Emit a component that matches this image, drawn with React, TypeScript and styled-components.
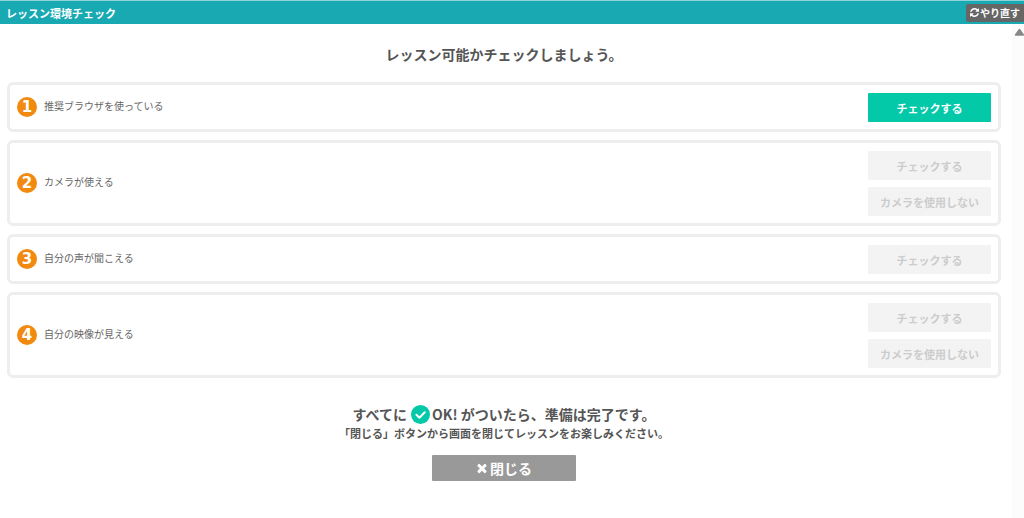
import React from "react";
import styled, { createGlobalStyle } from "styled-components";

const GlobalStyle = createGlobalStyle`
  * { box-sizing: border-box; }
  html, body, #root { height: 100%; }
  body {
    margin: 0;
    color: #555;
    background: #fff;
    font-family: "Noto Sans CJK JP", "Noto Sans", sans-serif;
    overflow: hidden;
  }
  button { font-family: inherit; padding: 0; border: 0; cursor: pointer; }
`;

const Page = styled.div`
  display: flex;
  flex-direction: column;
  height: 100%;
`;

const Header = styled.header`
  display: flex;
  align-items: center;
  justify-content: space-between;
  flex: none;
  height: 24px;
  padding-left: 6px;
  border-top: 1px solid #8fd3d8;
  background: #18a9b3;
  color: #fff;
`;

const Title = styled.h1`
  margin: 0;
  font-size: 11px;
  line-height: 16px;
`;

const RetryButton = styled.button`
  display: flex;
  align-items: center;
  gap: 1px;
  height: 18px;
  padding: 0 4px;
  border-radius: 2px 0 0 2px;
  background: #666;
  color: #fff;
  font-size: 10px;
  font-weight: 700;
  line-height: 18px;
`;

const Icon = styled.svg<{ $size: number }>`
  flex: none;
  width: ${(p) => p.$size}px;
  height: ${(p) => p.$size}px;
  fill: currentColor;
`;

const Body = styled.div`
  display: flex;
  flex: 1;
  min-height: 0;
`;

const Content = styled.main`
  flex: 1;
  min-width: 0;
  padding: 19px 11px 0 7px;
  text-align: center;
`;

const ScrollTrack = styled.div`
  flex: none;
  width: 12px;
  padding: 4px 0 0 2px;
  background: #fcfcfc;
  overflow: hidden;
`;

const ScrollArrow = styled.svg`
  display: block;
  width: 10px;
  height: 8px;
`;

const Heading = styled.h2`
  margin: 0 0 17px;
  font-size: 14px;
  line-height: 22px;
`;

const Steps = styled.ol`
  display: grid;
  gap: 8px;
  margin: 0;
  padding: 0;
  list-style: none;
`;

const Step = styled.li`
  display: flex;
  align-items: center;
  padding: 8px 7px 7px;
  border: 3px solid #eee;
  border-radius: 6px;
  text-align: left;
`;

const StepInfo = styled.div`
  display: flex;
  flex: 1;
  align-items: center;
  gap: 7px;
  padding-bottom: 2px;
`;

const Badge = styled.span`
  display: grid;
  place-items: center;
  width: 20px;
  height: 20px;
  border-radius: 50%;
  background: #f28a0f;
  color: #fff;
  font-family: "DejaVu Sans", sans-serif;
  font-size: 15px;
  font-weight: 700;
  line-height: 20px;
`;

const Label = styled.span`
  padding-bottom: 2px;
  color: #666;
  font-size: 10px;
  line-height: 16px;
`;

const Actions = styled.div`
  display: grid;
  gap: 7px;
  width: 123px;
`;

const ActionButton = styled.button`
  height: 29px;
  border-radius: 1px;
  background: #04c9a9;
  color: #fff;
  font-size: 11px;
  font-weight: 700;

  &:disabled {
    background: #f3f3f3;
    color: #ccc;
    cursor: default;
  }
`;

const Summary = styled.p`
  display: flex;
  align-items: center;
  justify-content: center;
  margin: 26px 0 0;
  font-size: 14px;
  font-weight: 700;
  line-height: 20px;
`;

const OkMark = styled.svg`
  width: 19px;
  height: 19px;
  margin: 0 2px 0 4px;
`;

const Note = styled.p`
  margin: 1px 0 14px;
  font-size: 11px;
  font-weight: 700;
  line-height: 16px;
`;

const CloseButton = styled.button`
  display: inline-flex;
  align-items: center;
  justify-content: center;
  gap: 2px;
  width: 144px;
  height: 26px;
  border-radius: 1px;
  background: #999;
  color: #fff;
  font-size: 14px;
  font-weight: 700;
  line-height: 26px;
`;

const steps = [
  { label: "推奨ブラウザを使っている", enabled: true, actions: ["チェックする"] },
  { label: "カメラが使える", enabled: false, actions: ["チェックする", "カメラを使用しない"] },
  { label: "自分の声が聞こえる", enabled: false, actions: ["チェックする"] },
  { label: "自分の映像が見える", enabled: false, actions: ["チェックする", "カメラを使用しない"] },
];

export default function App() {
  return (
    <Page>
      <GlobalStyle />
      <Header>
        <Title>レッスン環境チェック</Title>
        <RetryButton type="button">
          <Icon $size={9} viewBox="128 128 1536 1536" aria-hidden="true">
            <path d="M1639 1056q0 5-1 7-64 268-268 434.5t-478 166.5q-146 0-282.5-55t-243.5-157l-129 129q-19 19-45 19t-45-19-19-45v-448q0-26 19-45t45-19h448q26 0 45 19t19 45-19 45l-137 137q71 66 161 102t187 36q134 0 250-65t186-179q11-17 53-117 8-23 30-23h192q13 0 22.5 9.5t9.5 22.5zm25-800v448q0 26-19 45t-45 19h-448q-26 0-45-19t-19-45 19-45l138-138q-148-137-349-137-134 0-250 65t-186 179q-11 17-53 117-8 23-30 23h-199q-13 0-22.5-9.5t-9.5-22.5v-7q65-268 270-434.5t480-166.5q146 0 284 55.5t245 156.5l130-129q19-19 45-19t45 19 19 45z" />
          </Icon>
          やり直す
        </RetryButton>
      </Header>
      <Body>
        <Content>
          <Heading>レッスン可能かチェックしましょう。</Heading>
          <Steps>
            {steps.map((step, i) => (
              <Step key={step.label}>
                <StepInfo>
                  <Badge>{i + 1}</Badge>
                  <Label>{step.label}</Label>
                </StepInfo>
                <Actions>
                  {step.actions.map((action) => (
                    <ActionButton key={action} type="button" disabled={!step.enabled}>
                      {action}
                    </ActionButton>
                  ))}
                </Actions>
              </Step>
            ))}
          </Steps>
          <Summary>
            すべてに
            <OkMark viewBox="0 0 19 19" aria-hidden="true">
              <circle cx="9.5" cy="9.5" r="9.5" fill="#04c9a9" />
              <path
                d="M5.4 9.8l3 2.9 5.4-5.5"
                fill="none"
                stroke="#fff"
                strokeWidth="2"
                strokeLinecap="round"
                strokeLinejoin="round"
              />
            </OkMark>
            OK! がついたら、準備は完了です。
          </Summary>
          <Note>「閉じる」ボタンから画面を閉じてレッスンをお楽しみください。</Note>
          <CloseButton type="button">
            <Icon $size={12} viewBox="128 128 1536 1536" aria-hidden="true">
              <path d="M1490 1322q0 40-28 68l-136 136q-28 28-68 28t-68-28l-294-294-294 294q-28 28-68 28t-68-28l-136-136q-28-28-28-68t28-68l294-294-294-294q-28-28-28-68t28-68l136-136q28-28 68-28t68 28l294 294 294-294q28-28 68-28t68 28l136 136q28 28 28 68t-28 68l-294 294 294 294q28 28 28 68z" />
            </Icon>
            閉じる
          </CloseButton>
        </Content>
        <ScrollTrack>
          <ScrollArrow viewBox="0 0 10 8" aria-hidden="true">
            <path
              d="M1.5 7L5.500 1.500L9.500 7z"
              fill="#888"
              stroke="#888"
              strokeWidth="1.5"
              strokeLinejoin="round"
            />
          </ScrollArrow>
        </ScrollTrack>
      </Body>
    </Page>
  );
}
